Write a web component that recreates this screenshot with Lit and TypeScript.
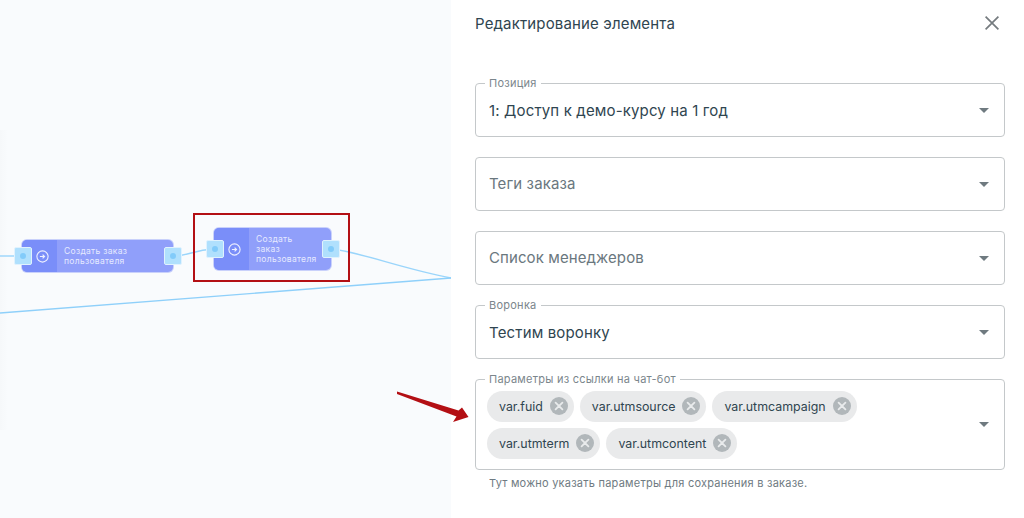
import { LitElement, html, css } from "lit";
import { customElement } from "lit/decorators.js";

const caret = html`<svg class="caret" width="10" height="5" viewBox="0 0 10 5"><path d="M0 0h10L5 5z" fill="#6f7a80"/></svg>`;
const chipX = html`<svg class="chipx" width="18" height="18" viewBox="0 0 18 18"><circle cx="9" cy="9" r="9" fill="#b1b7ba"/><path d="M5.6 5.6l6.8 6.8M12.4 5.6l-6.8 6.8" stroke="#e9ebec" stroke-width="1.8" stroke-linecap="round"/></svg>`;

@customElement("flow-node")
class FlowNode extends LitElement {
  static properties = { lines: { type: Array } };
  lines: string[] = [];
  static styles = css`
    :host { display: block; }
    .node { position: relative; display: flex; height: 100%; border-radius: 5px; background: #909ffa; box-shadow: 0 0 0 1px #c9d1fb; }
    .ico { width: 35px; flex: none; background: #7a8ef9; border-radius: 5px 0 0 5px; display: flex; align-items: center; justify-content: center; padding-left: 5px; box-sizing: border-box; }
    .txt { flex: 1; padding-left: 7px; display: flex; flex-direction: column; justify-content: center; font: 8.5px/10px Inter, sans-serif; letter-spacing: 0.3px; color: #e6eaff; }
    .port { position: absolute; box-sizing: border-box; width: 18px; height: 18px; border-radius: 2px; background: #b0e0fd; border: 1px solid #e0f2fe; display: flex; align-items: center; justify-content: center; top: 50%; margin-top: -9px; }
    .port i { width: 6px; height: 6px; border-radius: 50%; background: #82cbfa; }
    .l { left: -8px; } .r { right: -9px; }
  `;
  render() {
    return html`<div class="node">
      <div class="ico"><svg width="13" height="13" viewBox="0 0 13 13"><circle cx="6.5" cy="6.5" r="5.6" fill="none" stroke="#eef0ff" stroke-width="1.1"/><path d="M3.9 6.5h4.6M6.6 4.6l1.9 1.9-1.9 1.9" fill="none" stroke="#eef0ff" stroke-width="1.2"/></svg></div>
      <div class="txt">${this.lines.map((t) => html`<div>${t}</div>`)}</div>
      <div class="port l"><i></i></div><div class="port r"><i></i></div>
    </div>`;
  }
}

@customElement("app-root")
class AppRoot extends LitElement {
  static styles = css`
    :host { position: relative; display: flex; width: 1024px; height: 518px; overflow: hidden; background: #fff; font-family: Inter, "Noto Sans", sans-serif; color: #2f4550; }
    .canvas { position: relative; width: 451px; height: 518px; flex: none; background: #f9fbfd; overflow: hidden; }
    .band { position: absolute; left: 0; top: 130px; width: 8px; height: 300px; background: linear-gradient(90deg, #f6f8fa, #f9fbfd); }
    .canvas svg.wires { position: absolute; inset: 0; }
    .n1 { position: absolute; left: 22px; top: 240px; width: 151px; height: 32px; }
    .n2 { position: absolute; left: 214px; top: 228px; width: 117px; height: 42px; }
    .mark { position: absolute; left: 193px; top: 213px; width: 153px; height: 65px; border: 2px solid #b30f14; }
    .arrow { position: absolute; left: 0; top: 0; pointer-events: none; }
    .panel { flex: 1; padding: 0 19px 0 24px; display: flex; flex-direction: column; }
    .head { height: 46px; margin-bottom: 37px; padding-right: 6px; display: flex; align-items: center; justify-content: space-between; }
    .head h1 { margin: 0; font-size: 15px; font-weight: 400; letter-spacing: 0.15px; }
    .fields { display: flex; flex-direction: column; gap: 20px; }
    .field { position: relative; box-sizing: border-box; min-height: 54px; border: 1px solid #c4c8ca; border-radius: 4px; padding: 0 15px 0 13px; display: flex; align-items: center; justify-content: space-between; }
    .legend { position: absolute; top: -7px; left: 9px; padding: 0 4px; background: #fff; font-size: 11px; line-height: 13px; color: #7b868c; letter-spacing: 0.25px; }
    .val { font-size: 15px; letter-spacing: 0.15px; }
    .ph { font-size: 15px; color: #6a777e; letter-spacing: 0.1px; padding-bottom: 2px; }
    .chips-field { height: 91px; padding-left: 11px; }
    .chips { display: flex; flex-wrap: wrap; gap: 6px; width: 440px; }
    .chip { box-sizing: border-box; height: 31px; border-radius: 16px; background: #e9eaeb; display: flex; align-items: center; gap: 7px; padding: 0 6px 0 12px; font-size: 12.4px; }
    .chipx { flex: none; }
    .help { margin: 6px 0 0 14px; font-size: 11px; line-height: 14px; color: #6f7b82; letter-spacing: 0.23px; }
  `;
  render() {
    return html`
      <div class="canvas">
        <div class="band"></div>
        <svg class="wires" width="451" height="518" fill="none" stroke="#9ad5fb" stroke-width="1.4">
          <path d="M0 256H22"/>
          <path d="M173 256C190 256 192 250 214 249"/>
          <path d="M332 249C360 252 400 268 451 278"/>
          <path d="M0 313L451 278" stroke="#8fd0fa"/>
        </svg>
        <flow-node class="n1" .lines=${["Создать заказ", "пользователя"]}></flow-node>
        <flow-node class="n2" .lines=${["Создать", "заказ", "пользователя"]}></flow-node>
        <div class="mark"></div>
      </div>
      <div class="panel">
        <div class="head">
          <h1>Редактирование элемента</h1>
          <svg width="14" height="14" viewBox="0 0 14 14"><path d="M.6.6l12.8 12.8M13.4.6L.6 13.4" stroke="#757b7f" stroke-width="1.7"/></svg>
        </div>
        <div class="fields">
          <div class="field"><span class="legend">Позиция</span><span class="val">1: Доступ к демо-курсу на 1 год</span>${caret}</div>
          <div class="field"><span class="ph">Теги заказа</span>${caret}</div>
          <div class="field"><span class="ph">Список менеджеров</span>${caret}</div>
          <div class="field"><span class="legend">Воронка</span><span class="val">Тестим воронку</span>${caret}</div>
          <div>
            <div class="field chips-field"><span class="legend">Параметры из ссылки на чат-бот</span>
              <div class="chips">
                ${["var.fuid", "var.utmsource", "var.utmcampaign", "var.utmterm", "var.utmcontent"].map((c) => html`<div class="chip">${c}${chipX}</div>`)}
              </div>${caret}
            </div>
            <div class="help">Тут можно указать параметры для сохранения в заказе.</div>
          </div>
        </div>
      </div>
      <svg class="arrow" width="1024" height="518"><path d="M397 391.5L458.5 410.5L462 407.5L468.5 417L453 422L456.5 416.5L397 394z" fill="#b30f14"/></svg>`;
  }
}
